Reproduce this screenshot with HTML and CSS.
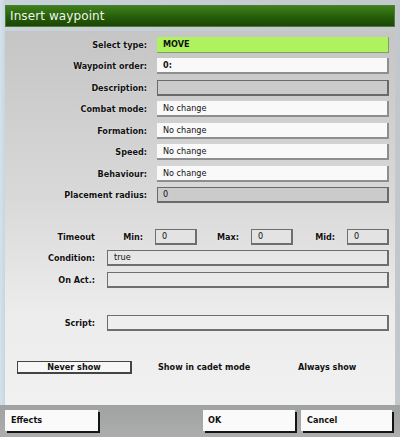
FILE: index.html
```html
<!DOCTYPE html>
<html>
<head>
<meta charset="utf-8">
<link rel="stylesheet" href="styles.css">
</head>
<body>
<div class="window">
  <div class="titlebar">Insert waypoint</div>
  <div class="panel">
    <div class="form">
      <div class="label">Select type:</div><div class="field select">MOVE</div>
      <div class="label">Waypoint order:</div><div class="field white bold">0:</div>
      <div class="label">Description:</div><div class="field disabled"></div>
      <div class="label">Combat mode:</div><div class="field white">No change</div>
      <div class="label">Formation:</div><div class="field white">No change</div>
      <div class="label">Speed:</div><div class="field white">No change</div>
      <div class="label">Behaviour:</div><div class="field white">No change</div>
      <div class="label">Placement radius:</div><div class="field disabled">0</div>
    </div>
    <div class="lower">
      <div class="label">Timeout</div>
      <div class="timeouts">
        <div class="tgroup"><div class="label tlabel">Min:</div><div class="box">0</div></div>
        <div class="tgroup"><div class="label tlabel">Max:</div><div class="box">0</div></div>
        <div class="tgroup"><div class="label tlabel">Mid:</div><div class="box">0</div></div>
      </div>
      <div class="label">Condition:</div><div class="box">true</div>
      <div class="label">On Act.:</div><div class="box"></div>
      <div class="spacer"></div>
      <div class="label">Script:</div><div class="box"></div>
    </div>
    <div class="showrow">
      <div class="never">Never show</div>
      <div class="opt cadet">Show in cadet mode</div>
      <div class="opt always">Always show</div>
    </div>
  </div>
  <div class="footer">
    <div class="btn effects">Effects</div>
    <div class="btn ok">OK</div>
    <div class="btn cancel">Cancel</div>
  </div>
</div>
</body>
</html>
```
FILE: styles.css
```css
html, body {
  margin: 0;
  padding: 0;
}
body {
  width: 400px;
  height: 437px;
  overflow: hidden;
  background: linear-gradient(to right, #d3e2ec 0px, #c8d3da 6px, #c3c9cc 394px, #c0c8cd 400px);
  font-family: "DejaVu Sans Condensed", "DejaVu Sans", sans-serif;
  font-stretch: condensed;
  font-size: 9px;
  color: #111;
}
.window {
  padding: 5px 5px 0 5px;
  height: 437px;
  box-sizing: border-box;
  display: flex;
  flex-direction: column;
}
.titlebar {
  height: 22px;
  box-sizing: border-box;
  margin-bottom: 4px;
  padding-left: 4px;
  background: linear-gradient(to bottom, #3f7f1b 0%, #2f6a10 35%, #245a09 60%, #1c4605 100%);
  border: 1px solid #4f7a38;
  color: #eef4ea;
  font-family: "DejaVu Sans", sans-serif;
  font-stretch: normal;
  font-size: 12px;
  line-height: 20px;
  letter-spacing: 0.1px;
}
.panel {
  height: 374px;
  box-sizing: border-box;
  padding-top: 6px;
  background: linear-gradient(to bottom, #c5c5c5 0%, #d9d9d9 45%, #ececec 75%, #f1f1f1 100%);
}
.label {
  font-weight: bold;
  text-align: right;
  line-height: 16px;
  white-space: nowrap;
  text-shadow: 0 0 2px rgba(255, 255, 255, 0.7);
}
.form {
  display: grid;
  grid-template-columns: 142px 232px;
  column-gap: 10px;
  row-gap: 5.43px;
  grid-auto-rows: 16px;
}
.field {
  box-sizing: border-box;
  padding-left: 6px;
  line-height: 15px;
  white-space: nowrap;
}
.select {
  background: #aef25f;
  border-right: 1px solid #7f9f5f;
  border-bottom: 1px solid #7f9f5f;
  font-weight: bold;
}
.white {
  background: #f9f9f9;
  border-right: 2px solid #8e8e8e;
  border-bottom: 2px solid #8e8e8e;
}
.bold {
  font-weight: bold;
}
.disabled {
  background: #cbcbcb;
  border: 1px solid #6a6a6a;
  border-right-width: 2px;
  border-bottom-width: 2px;
  padding-left: 5px;
  line-height: 13px;
}
.lower {
  margin-top: 26px;
  display: grid;
  grid-template-columns: 90px 282px;
  column-gap: 12px;
  row-gap: 5.5px;
  grid-auto-rows: 16px;
}
.spacer {
  grid-column: 1 / 3;
}
.timeouts {
  display: flex;
  gap: 6px;
}
.tgroup {
  width: 90px;
  display: flex;
  gap: 12px;
}
.tlabel {
  width: 36px;
}
.box {
  flex: 1;
  box-sizing: border-box;
  border: 1px solid #6e6e6e;
  border-right-width: 2px;
  border-bottom-width: 2px;
  padding-left: 6px;
  line-height: 13px;
  background: rgba(255, 255, 255, 0.15);
}
.showrow {
  margin-top: 30px;
  padding-left: 12px;
  display: flex;
  align-items: center;
}
.never {
  width: 115px;
  height: 13px;
  box-sizing: border-box;
  border: 1px solid #444;
  border-right-width: 2px;
  border-bottom-width: 2px;
  background: #f7f7f7;
  font-weight: bold;
  text-align: center;
  line-height: 10px;
}
.opt {
  font-weight: bold;
  line-height: 13px;
}
.cadet {
  margin-left: 26px;
  width: 140px;
}
.footer {
  flex: 1;
  margin: 0 -5px;
  padding: 5px 8px 0 5px;
  display: flex;
  background: linear-gradient(to bottom, #a0a2a2, #acaeae);
}
.btn {
  height: 21px;
  box-sizing: border-box;
  background: #fafafa;
  box-shadow: 2px 2px 0 #141414;
  font-weight: bold;
  line-height: 21px;
  padding-left: 6px;
}
.effects {
  width: 93px;
}
.ok {
  width: 92px;
  margin-left: auto;
  padding-left: 5px;
}
.cancel {
  width: 91px;
  margin-left: 6px;
}
```
